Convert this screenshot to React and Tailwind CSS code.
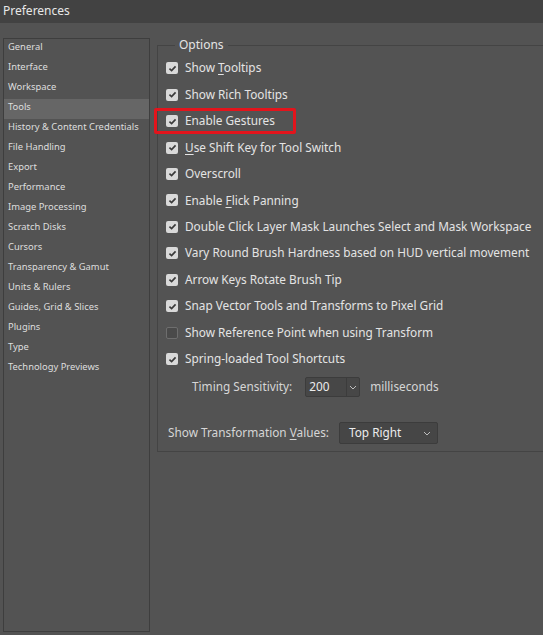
import React from 'react';

const categories = [
  'General',
  'Interface',
  'Workspace',
  'Tools',
  'History & Content Credentials',
  'File Handling',
  'Export',
  'Performance',
  'Image Processing',
  'Scratch Disks',
  'Cursors',
  'Transparency & Gamut',
  'Units & Rulers',
  'Guides, Grid & Slices',
  'Plugins',
  'Type',
  'Technology Previews',
];

// label parts: [before, underlined letter, after]
const options = [
  { label: ['Show ', 'T', 'ooltips'], checked: true },
  { label: ['Show Rich Tooltips'], checked: true },
  { label: ['Enable Gestures'], checked: true },
  { label: ['', 'U', 'se Shift Key for Tool Switch'], checked: true },
  { label: ['Overscroll'], checked: true },
  { label: ['Enable ', 'F', 'lick Panning'], checked: true },
  { label: ['Double Click Layer Mask Launches Select and Mask Workspace'], checked: true },
  { label: ['Vary Round Brush Hardness based on HUD vertical movement'], checked: true },
  { label: ['Arrow Keys Rotate Brush Tip'], checked: true },
  { label: ['Snap Vector Tools and Transforms to Pixel Grid'], checked: true },
  { label: ['Show Reference Point when using Transform'], checked: false },
  { label: ['Spring-loaded Tool Shortcuts'], checked: true },
];

const Label = ({ parts }) => (
  <span>
    {parts[0]}
    {parts[1] && <span className="underline underline-offset-2">{parts[1]}</span>}
    {parts[2]}
  </span>
);

const Checkbox = ({ checked }) =>
  checked ? (
    <span className="flex h-[12px] w-[12px] shrink-0 items-center justify-center rounded-[2px] bg-[#d9d9d9]">
      <svg width="9" height="9" viewBox="0 0 10 10">
        <path d="M1.6 5.2 L4 7.4 L8.4 2.6" fill="none" stroke="#3a3a3a" strokeWidth="1.8" />
      </svg>
    </span>
  ) : (
    <span className="h-[12px] w-[12px] shrink-0 rounded-[2px] border border-[#6e6e6e] bg-[#4a4a4a]" />
  );

const Chevron = () => (
  <svg width="8" height="5" viewBox="0 0 8 5">
    <path d="M1 1 L4 4 L7 1" fill="none" stroke="#bdbdbd" strokeWidth="1" />
  </svg>
);

export default function App() {
  return (
    <div
      className="h-[635px] w-[543px] overflow-hidden bg-[#535353] text-[#e4e4e4]"
      style={{ fontFamily: '"Noto Sans", "Open Sans", sans-serif' }}
    >
      {/* Title bar */}
      <div className="flex h-[23px] items-center bg-[#424242] pb-[1px] pl-[3px] text-[12px] text-[#e8e8e8]">
        Preferences
      </div>

      <div className="flex">
        {/* Category list */}
        <div className="ml-[3px] mt-[15px] h-[594px] w-[147px] shrink-0 border border-[#3e3e3e] bg-[#535353] text-[9.4px] text-[#dedede]">
          {categories.map((c) => (
            <div
              key={c}
              className={`flex h-[20px] items-center pb-[3px] pl-[4px] ${c === 'Tools' ? 'bg-[#666666]' : ''}`}
            >
              {c}
            </div>
          ))}
        </div>

        {/* Options group */}
        <div className="relative ml-[7px] mt-[22px] h-[407px] w-[400px] shrink-0 border border-[#444444] pl-[8px] pt-[9px] text-[11.8px]">
          <span className="absolute left-[17px] top-[-10px] bg-[#535353] px-[4px] text-[12px] text-[#e4e4e4]">
            Options
          </span>

          {options.map((o, i) => (
            <div key={i} className="flex h-[26.45px] items-center gap-[7px] whitespace-nowrap">
              <Checkbox checked={o.checked} />
              <Label parts={o.label} />
            </div>
          ))}

          {/* Timing sensitivity */}
          <div className="mt-[2px] flex h-[26px] items-center whitespace-nowrap pl-[26px] text-[#d6d6d6]">
            <span>Timing Sensitivity:</span>
            <div className="ml-[13px] flex h-[20px] w-[55px] items-stretch rounded-[2px] border border-[#3c3c3c] bg-[#474747] text-[#ececec]">
              <span className="flex w-[40px] items-center pl-[3px]">200</span>
              <span className="flex flex-1 items-center justify-center border-l border-[#3c3c3c]">
                <Chevron />
              </span>
            </div>
            <span className="ml-[10px]">milliseconds</span>
          </div>

          {/* Transformation values */}
          <div className="mt-[21px] flex h-[24px] items-center whitespace-nowrap pl-[2px] text-[#d6d6d6]">
            <span>
              Show Transformation <span className="underline underline-offset-2">V</span>alues:
            </span>
            <div className="ml-[10px] flex h-[22px] w-[99px] items-center justify-between rounded-[2px] border border-[#3c3c3c] bg-[#464646] pl-[9px] pr-[6px] text-[#ececec]">
              <span>Top Right</span>
              <Chevron />
            </div>
          </div>

          {/* Highlight annotation */}
          <div className="pointer-events-none absolute left-[-4px] top-[62px] h-[26px] w-[142px] rounded-[2px] border-[3px] border-[#e3141c]" />
        </div>
      </div>
    </div>
  );
}
